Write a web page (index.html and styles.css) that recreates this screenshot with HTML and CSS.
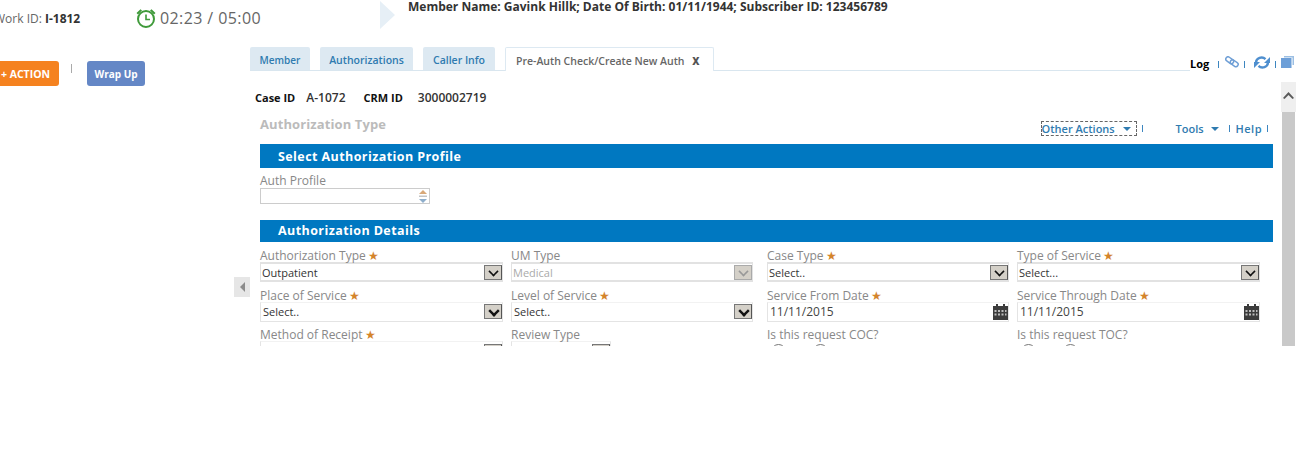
FILE: index.html
```html
<!DOCTYPE html>
<html lang="en">
<head>
<meta charset="utf-8">
<title>Pre-Auth Check</title>
<link rel="stylesheet" href="styles.css">
</head>
<body>
<div class="app">
  <header class="top">
    <div class="work">Work ID: <b>I-1812</b></div>
    <div class="timer">
      <svg class="clock" width="22" height="22" viewBox="0 0 22 22"><circle cx="11" cy="12" r="8" fill="none" stroke="#3f9a3a" stroke-width="2"/><path d="M11 7.500V12.500H15" fill="none" stroke="#3f9a3a" stroke-width="1.600"/><path d="M1.500 6 5.500 2.200 7 3.600 3 7.500ZM20.500 6 16.500 2.200 15 3.600 19 7.500Z" fill="#3f9a3a"/></svg>
      <span>02:23 / 05:00</span>
    </div>
    <div class="chev"></div>
    <div class="member">Member Name: Gavink Hillk; Date Of Birth: 01/11/1944; Subscriber ID: 123456789</div>
  </header>
  <div class="main">
    <aside class="side">
      <div class="side-btns">
        <button class="btn orange">+ ACTION</button>
        <span class="pipe"></span>
        <button class="btn blue">Wrap Up</button>
      </div>
      <button class="collapse"><svg width="5" height="10" viewBox="0 0 5 10"><path d="M5 0V10L0 5Z" fill="#8c8c8c"/></svg></button>
    </aside>
    <section class="content">
      <div class="tabbar">
        <nav class="tabs">
          <a class="tab w1">Member</a>
          <a class="tab w2">Authorizations</a>
          <a class="tab w3">Caller Info</a>
          <a class="tab active">Pre-Auth Check/Create New Auth <b class="x">X</b></a>
        </nav>
        <div class="util">
          <span class="log">Log</span><i class="sep"></i>
          <svg class="clip" width="14" height="12" viewBox="0 0 14 12"><g fill="none" stroke="#6f9fd6" stroke-width="1.500"><rect x="0.500" y="2" width="8.500" height="4.500" rx="2.200" transform="rotate(35 4.700 4.200)"/><rect x="5" y="5" width="8.500" height="4.500" rx="2.200" transform="rotate(35 9.200 7.200)"/></g></svg><i class="sep"></i>
          <svg class="refresh" width="16" height="13" viewBox="0 0 16 13"><g fill="none" stroke="#4f8fcf" stroke-width="2.400"><path d="M2 6.500A5.500 5 0 0 1 11.500 3.200"/><path d="M14 6.500A5.500 5 0 0 1 4.500 9.800"/></g><path d="M16 1V7H10ZM0 12V6H6Z" fill="#4f8fcf"/></svg><i class="sep"></i>
          <svg width="13" height="12" viewBox="0 0 13 12"><path d="M3 0H13V9H11.500V1.500H3Z" fill="#9cbfe3"/><rect x="0" y="2" width="10.500" height="10" fill="#6d9fd8"/></svg>
        </div>
      </div>
      <div class="body">
        <div class="form">
          <div class="ids"><b>Case ID</b><span>A-1072</span><b>CRM ID</b><span class="crm">3000002719</span></div>
          <div class="title-row">
            <h1>Authorization Type</h1>
            <div class="tools">
              <a class="tool focused">Other Actions <i class="caret"></i></a><i class="sep s1"></i>
              <a class="tool t2">Tools <i class="caret"></i></a><i class="sep"></i>
              <a class="tool help">Help</a><i class="sep"></i>
            </div>
          </div>
          <h2 class="bar b1">Select Authorization Profile</h2>
          <div class="profile">
            <label>Auth Profile</label>
            <div class="spin"><svg width="10" height="13" viewBox="0 0 10 13"><path d="M5 0 9 4H1Z" fill="#d8a878"/><rect x="1" y="5.500" width="8" height="1.500" fill="#c4c4c4"/><path d="M5 13 9 9H1Z" fill="#8eaecb"/></svg></div>
          </div>
          <h2 class="bar b2">Authorization Details</h2>
          <div class="grid">
            <div class="f"><label>Authorization Type<em>★</em></label><div class="sel thick"><span>Outpatient</span><i class="dd"></i></div></div>
            <div class="f"><label>UM Type</label><div class="sel thick off"><span>Medical</span><i class="dd"></i></div></div>
            <div class="f"><label>Case Type<em>★</em></label><div class="sel thick"><span>Select..</span><i class="dd"></i></div></div>
            <div class="f"><label>Type of Service<em>★</em></label><div class="sel thick"><span>Select...</span><i class="dd"></i></div></div>

            <div class="f"><label>Place of Service<em>★</em></label><div class="sel"><span>Select..</span><i class="dd fat"></i></div></div>
            <div class="f"><label>Level of Service<em>★</em></label><div class="sel"><span>Select..</span><i class="dd fat"></i></div></div>
            <div class="f"><label>Service From Date<em>★</em></label><div class="sel date"><span>11/11/2015</span><svg class="cal" width="15" height="16" viewBox="0 0 15 16"><path d="M0 2H3V0H5V2H10V0H12V2H15V16H0Z" fill="#3c3c3c"/><path d="M1.500 6H3.500V8H1.500ZM5 6H7V8H5ZM8.500 6H10.500V8H8.500ZM12 6H13.500V8H12ZM1.500 9.500H3.500V11.500H1.500ZM5 9.500H7V11.500H5ZM8.500 9.500H10.500V11.500H8.500ZM12 9.500H13.500V11.500H12Z" fill="#bdbdbd"/></svg></div></div>
            <div class="f"><label>Service Through Date<em>★</em></label><div class="sel date"><span>11/11/2015</span><svg class="cal" width="15" height="16" viewBox="0 0 15 16"><path d="M0 2H3V0H5V2H10V0H12V2H15V16H0Z" fill="#3c3c3c"/><path d="M1.500 6H3.500V8H1.500ZM5 6H7V8H5ZM8.500 6H10.500V8H8.500ZM12 6H13.500V8H12ZM1.500 9.500H3.500V11.500H1.500ZM5 9.500H7V11.500H5ZM8.500 9.500H10.500V11.500H8.500ZM12 9.500H13.500V11.500H12Z" fill="#bdbdbd"/></svg></div></div>

            <div class="f"><label>Method of Receipt<em>★</em></label><div class="sel"><span></span><i class="dd"></i></div></div>
            <div class="f"><label>Review Type</label><div class="sel narrow"><span></span><i class="dd"></i></div></div>
            <div class="f"><label>Is this request COC?</label><div class="radios"><i></i><i></i></div></div>
            <div class="f"><label>Is this request TOC?</label><div class="radios"><i></i><i></i></div></div>
          </div>
        </div>
        <div class="scroll">
          <div class="up"><svg width="11" height="7" viewBox="0 0 11 7"><path d="M5.500 0 11 6 9.500 7 5.500 3 1.500 7 0 6Z" fill="#5a5a5a"/></svg></div>
          <div class="thumb"></div>
        </div>
      </div>
    </section>
  </div>
</div>
</body>
</html>
```
FILE: styles.css
```css
* { box-sizing: border-box; }
html, body { margin: 0; background: #fff; }
body { font-family: "Open Sans", sans-serif; color: #555; overflow: hidden; }
.app { height: 346px; width: 1299px; overflow: hidden; }

.top { display: flex; height: 47px; align-items: flex-start; }
.work { margin-left: -6px; width: 141px; padding-top: 10px; font-size: 12px; line-height: 17px; color: #666; white-space: nowrap; }
.work b { color: #333; }
.timer { display: flex; align-items: center; gap: 3px; width: 245px; padding-top: 7px; font-size: 16px; line-height: 22px; color: #666; letter-spacing: .4px; }
.clock { flex: none; margin-top: -1px; }
.chev { width: 15px; height: 28px; margin-top: 1px; background: #e6eff6; clip-path: polygon(0 0, 100% 50%, 0 100%); }
.member { margin-left: 13px; margin-top: -1px; font-size: 12px; line-height: 16px; font-weight: 700; color: #333; white-space: nowrap; }

.main { display: flex; height: 299px; position: relative; }
.side { width: 250px; flex: none; padding-top: 14px; }
.side-btns { display: flex; align-items: flex-start; height: 25px; margin-left: -8px; }
.btn { height: 25px; border: 0; border-radius: 3px; color: #fff; font: 700 10.500px "Open Sans", sans-serif; padding: 0; }
.orange { width: 67px; background: #f5821f; }
.blue { width: 58px; background: #6487c6; font-size: 10px; }
.pipe { width: 1px; height: 9px; margin: 3px 15px 0 12px; background: #aaa; }
.collapse { position: absolute; left: 234px; top: 230px; width: 16px; height: 20px; border: 0; padding: 0; background: #e6e6e6; display: flex; align-items: center; justify-content: center; }

.content { flex: 1; min-width: 0; display: flex; flex-direction: column; }
.tabbar { display: flex; height: 24px; align-items: flex-start; }
.tabs { width: 940px; height: 24px; display: flex; gap: 10px; border-bottom: 1px solid #d9e6ef; }
.tab { height: 23px; font-size: 10.500px; line-height: 26px; font-weight: 600; text-align: center; color: #2f7bb0; background: #dde9f2; border-radius: 2px 2px 0 0; white-space: nowrap; }
.w1 { width: 60px; font-size: 10px; }
.w2 { width: 93px; }
.w3 { width: 72px; }
.tab.active { background: #fff; color: #666; height: 24px; border: 1px solid #dde9f2; border-bottom: 0; padding: 0 13px 0 10px; margin-bottom: -1px; }
.x { margin-left: 5px; font-size: 10px; color: #555; }
.util { display: flex; align-items: flex-start; height: 24px; padding-top: 9px; }
.log { font-size: 11px; line-height: 16px; font-weight: 700; color: #000; width: 23px; }
.sep { display: inline-block; flex: none; width: 1px; height: 7px; background: #3d86c0; }
.util .sep { margin: 5px 5px 0; }
.util .clip { margin-left: 1px; }
.util .refresh { margin-left: 4px; }
.util svg { flex: none; }

.body { display: flex; flex: 1; min-height: 0; }
.form { width: 1023px; flex: none; }
.scroll { width: 15px; margin-left: 8px; margin-top: 11px; display: flex; flex-direction: column; flex: none; }
.up { height: 30px; background: #efefef; display: flex; justify-content: center; padding-top: 10px; }
.thumb { flex: 1; background: #c9c9c9; margin: 0 1px; }

.ids { display: flex; height: 14px; padding-left: 5px; margin-top: 20px; font-size: 11px; line-height: 14px; color: #111; }
.ids b { font-weight: 700; }
.ids span { margin-left: 11px; margin-right: 18px; font-size: 12px; color: #333; font-weight: 600; }
.ids .crm { margin-left: 15px; }
.title-row { height: 29px; margin-top: 10px; padding-left: 10px; display: flex; justify-content: space-between; }
h1 { margin: 0; font-size: 13px; line-height: 18px; font-weight: 700; color: #bbb; letter-spacing: .1px; }
.tools { display: flex; align-items: center; height: 15px; margin-top: 6px; font-size: 11px; font-weight: 600; color: #2f7bb0; }
.tool { white-space: nowrap; line-height: 15px; }
.t2 { margin-right: 5px; }
.help { letter-spacing: .5px; }
.focused { width: 96px; height: 15px; outline: 1px dashed #666; outline-offset: -1px; padding-left: 1px; }
.tools .sep { margin: 0 5px; }
.tools .s1 { margin-right: 33px; }
.caret { display: inline-block; width: 0; height: 0; margin-left: 5px; vertical-align: 2px; border: 4px solid transparent; border-top-color: #2f7bb0; border-bottom: 0; }

.bar { margin: 0 0 0 10px; padding-left: 18px; background: #0078c1; color: #fff; font-size: 12.500px; font-weight: 700; display: flex; align-items: center; width: 1013px; letter-spacing: .42px; }
.b1 { height: 24px; padding-top: 1px; }
.b2 { height: 22px; margin-top: 24px; padding-bottom: 1px; }
.profile { padding-left: 10px; height: 28px; padding-top: 5px; font-size: 12px; color: #888; display: flex; flex-direction: column; }
.profile label { line-height: 15px; }
.spin { width: 170px; height: 16px; flex: none; border: 1px solid #ccc; display: flex; justify-content: flex-end; align-items: center; padding-right: 1px; }

.grid { display: grid; grid-template-columns: 243px 242px 242px 243px; column-gap: 8px; margin-left: 10px; grid-auto-rows: 39.500px; padding-top: 7px; }
.grid .f:nth-child(4n+3), .grid .f:nth-child(4n) { margin-left: 6px; margin-right: -6px; }
.f label { display: block; height: 13px; line-height: 13px; font-size: 12px; color: #888; white-space: nowrap; }
.f em { font-style: normal; color: #d4842b; font-size: 12px; margin-left: 2px; }
.sel { display: flex; align-items: center; justify-content: space-between; height: 20px; border: 1px solid #e4e4e4; border-top-color: #f2f2f2; padding-left: 2px; font-size: 11px; color: #333; }
.thick { border: 2px solid #e2e2e2; border-left-width: 1px; border-right-width: 1px; padding-left: 1px; }
.off { color: #aaa; }
.narrow { width: 100px; }
.date { font-size: 12px; color: #444; padding-right: 0; }
.dd { width: 18px; height: 15px; flex: none; background: #d4d0c8; border: 1px solid #777; border-right-color: #555; position: relative; }
.dd::after { content: ""; position: absolute; left: 4px; top: 1px; width: 7px; height: 7px; border-right: 2px solid #111; border-bottom: 2px solid #111; transform: rotate(45deg) scale(.8); }
.off .dd { border-color: #aaa; }
.off .dd::after { border-color: #999; }
.fat::after { border-width: 3px; }
.cal { flex: none; }
.radios { display: flex; gap: 27px; padding: 3px 0 0 4px; }
.radios i { display: block; width: 15px; height: 15px; border: 1px solid #777; border-radius: 50%; }
```
